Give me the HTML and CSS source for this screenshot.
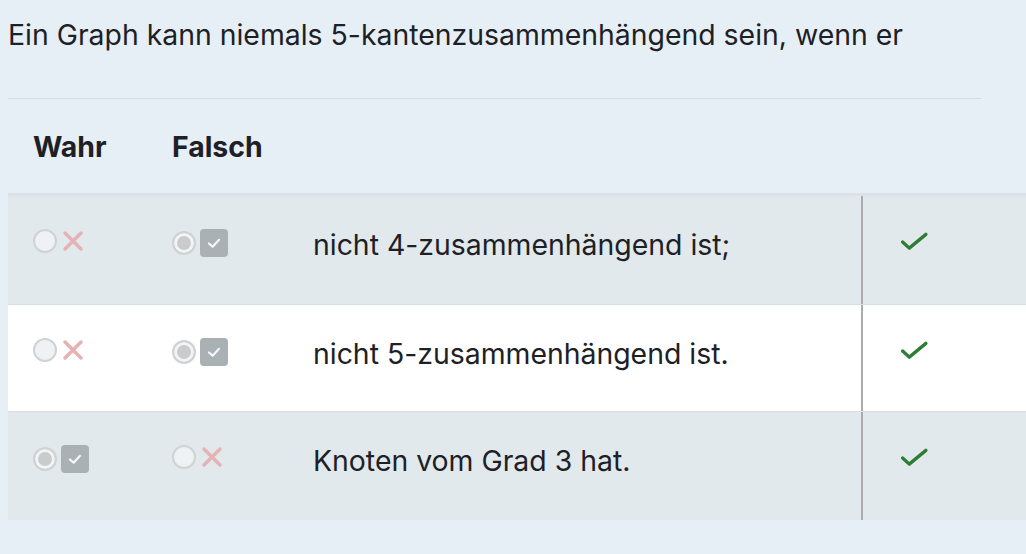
FILE: index.html
```html
<!DOCTYPE html>
<html lang="de">
<head>
<meta charset="utf-8">
<link rel="stylesheet" href="styles.css">
</head>
<body>
<div class="page">
  <div class="qtext">Ein Graph kann niemals 5-kantenzusammenhängend sein, wenn er</div>
  <div class="table">
    <div class="row head">
      <div class="c1">Wahr</div>
      <div class="c2">Falsch</div>
      <div class="c3"></div>
      <div class="c4 nob"></div>
    </div>
    <div class="row stripe">
      <div class="c1 opts"><span class="radio"></span><svg class="cross" viewBox="0 0 24 24"><path d="M4 4L20 20M20 4L4 20"/></svg></div>
      <div class="c2 opts"><span class="radio on"></span><span class="box"><svg viewBox="0 0 24 24"><path d="M6.5 12.5L10.5 16L17.5 8.5"/></svg></span></div>
      <div class="c3 txt">nicht 4-zusammenhängend ist;</div>
      <div class="c4"><svg class="ok" viewBox="0 0 30 20"><path d="M2.5 10.5L9.5 17L27 2.5"/></svg></div>
    </div>
    <div class="row white">
      <div class="c1 opts"><span class="radio"></span><svg class="cross" viewBox="0 0 24 24"><path d="M4 4L20 20M20 4L4 20"/></svg></div>
      <div class="c2 opts"><span class="radio on"></span><span class="box"><svg viewBox="0 0 24 24"><path d="M6.5 12.5L10.5 16L17.5 8.5"/></svg></span></div>
      <div class="c3 txt">nicht 5-zusammenhängend ist.</div>
      <div class="c4"><svg class="ok" viewBox="0 0 30 20"><path d="M2.5 10.5L9.5 17L27 2.5"/></svg></div>
    </div>
    <div class="row stripe">
      <div class="c1 opts"><span class="radio on"></span><span class="box"><svg viewBox="0 0 24 24"><path d="M6.5 12.5L10.5 16L17.5 8.5"/></svg></span></div>
      <div class="c2 opts"><span class="radio"></span><svg class="cross" viewBox="0 0 24 24"><path d="M4 4L20 20M20 4L4 20"/></svg></div>
      <div class="c3 txt">Knoten vom Grad 3 hat.</div>
      <div class="c4"><svg class="ok" viewBox="0 0 30 20"><path d="M2.5 10.5L9.5 17L27 2.5"/></svg></div>
    </div>
  </div>
</div>
</body>
</html>
```

FILE: styles.css
```css
html, body {
  margin: 0;
  padding: 0;
  background: #e7eff6;
  overflow: hidden;
}
body {
  font-family: Inter, "Liberation Sans", sans-serif;
  color: #1d2125;
  font-size: 28.4px;
  line-height: 39px;
}
.page {
  padding-left: 8px;
  width: 1018px;
  overflow: hidden;
}
.qtext {
  width: 973px;
  padding-top: 15px;
  padding-bottom: 44px;
  border-bottom: 1px solid #d6dee5;
  white-space: nowrap;
}
.table {
  display: flex;
  flex-direction: column;
}
.row {
  display: grid;
  grid-template-columns: 164px 141px 548px 1fr;
  height: 108px;
}
.row.head {
  height: 94px;
  align-items: center;
  font-weight: 700;
  border-bottom: 3px solid #dbe2e8;
}
.row.stripe {
  background: #e1e9ed;
}
.row.white {
  background: #ffffff;
  border-top: 1px solid #d9dee1;
  border-bottom: 1px solid #d9dee1;
  height: 106px;
}
.c1 {
  padding-left: 25px;
}
.c4 {
  border-left: 2px solid #ababab;
  padding-left: 37px;
}
.c4.nob {
  border-left: none;
}
.txt {
  padding-top: 29px;
  white-space: nowrap;
}
.opts {
  display: flex;
  align-items: center;
  gap: 4px;
  padding-top: 33px;
  align-self: start;
}
.c1.opts {
  padding-left: 25px;
}
.radio {
  width: 24px;
  height: 24px;
  box-sizing: border-box;
  border-radius: 50%;
  border: 2px solid #cfd3d6;
  background: #eef2f5;
}
.radio.on {
  background: #c9cccd;
  box-shadow: inset 0 0 0 3px #f2f4f5;
}
.cross {
  width: 24px;
  height: 24px;
  fill: none;
  stroke: #e6b3b5;
  stroke-width: 3.5;
  stroke-linecap: round;
}
.box {
  width: 28px;
  height: 28px;
  border-radius: 4px;
  background: #aab1b5;
  display: flex;
  align-items: center;
  justify-content: center;
}
.box svg {
  width: 22px;
  height: 22px;
  fill: none;
  stroke: #f4f6f7;
  stroke-width: 2.4;
  stroke-linecap: round;
  stroke-linejoin: round;
}
.ok {
  margin-top: 36px;
  width: 29px;
  height: 19px;
  fill: none;
  stroke: #2f7d35;
  stroke-width: 3.5;
  stroke-linecap: round;
  stroke-linejoin: round;
  display: block;
}
```
